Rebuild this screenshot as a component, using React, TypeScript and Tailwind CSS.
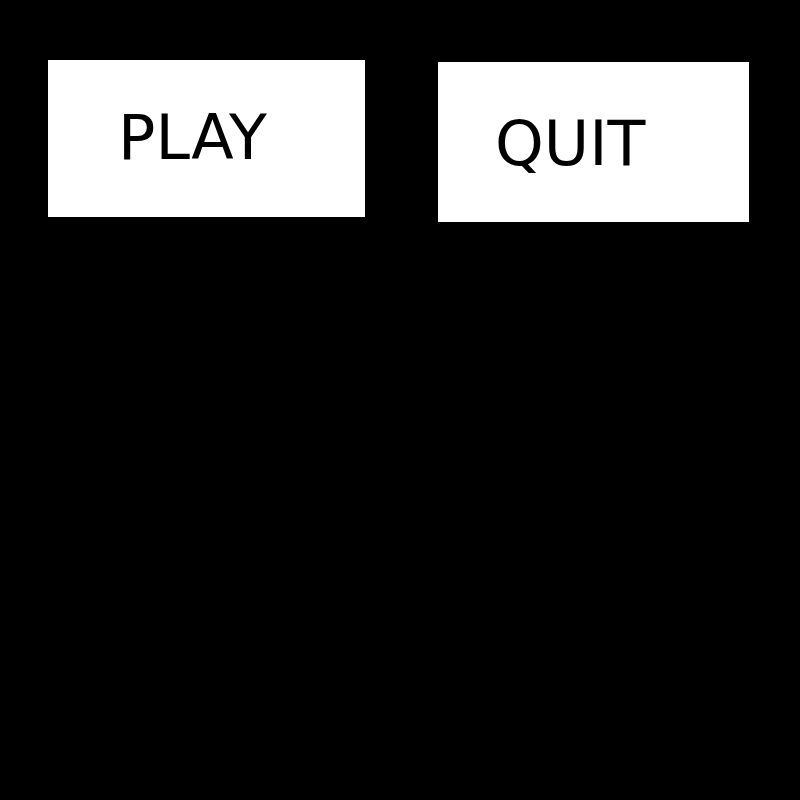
export default function App() {
  return (
    <div className="min-h-[800px] w-[800px] bg-black font-['DejaVu_Sans',sans-serif]">
      <div className="flex items-start pl-[48px] pt-[60px]">
        <button className="flex h-[157px] w-[317px] items-start bg-white pl-[70px] pt-[47px] text-[62px] leading-none text-black">
          PLAY
        </button>
        <button className="ml-[73px] mt-[2px] flex h-[160px] w-[311px] items-start bg-white pl-[57px] pt-[51px] text-[62px] leading-none text-black">
          QUIT
        </button>
      </div>
    </div>
  );
}
